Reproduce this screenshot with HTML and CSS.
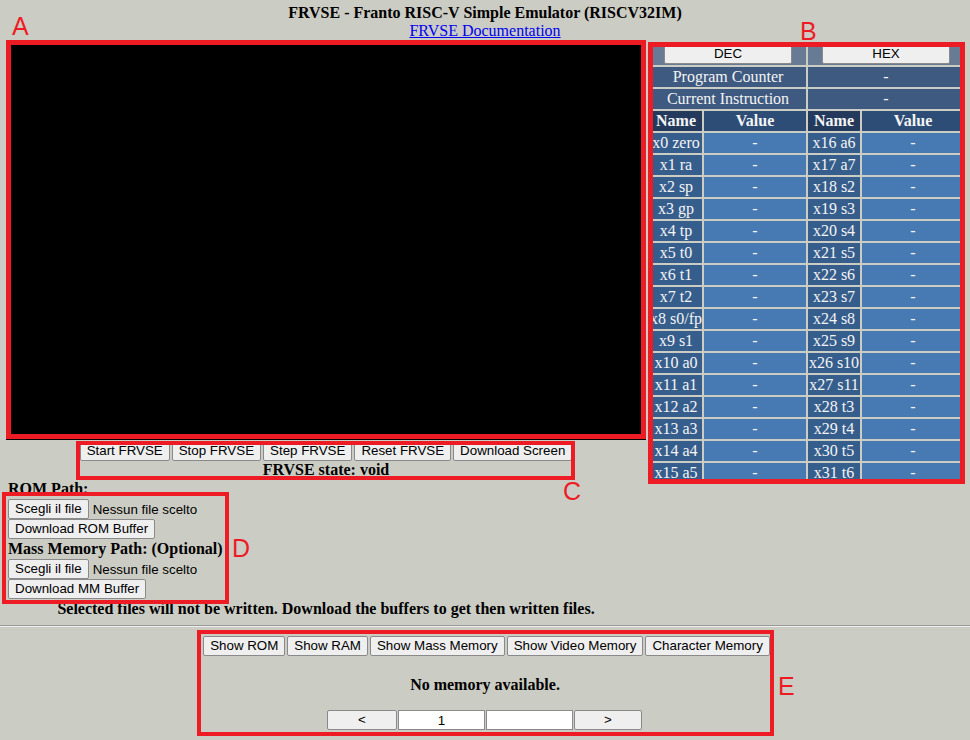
FILE: index.html
```html
<!DOCTYPE html>
<html lang="it">
<head>
<meta charset="utf-8">
<title>FRVSE</title>
<link rel="stylesheet" href="styles.css">
</head>
<body>
<header class="top">
  <div class="title">FRVSE - Franto RISC-V Simple Emulator (RISCV32IM)</div>
  <div class="doc-line"><a class="doc" href="#">FRVSE Documentation</a></div>
</header>

<main class="main">
  <section class="left">
    <div class="screen"></div>
    <div class="controls">
      <button class="btn">Start FRVSE</button>
      <button class="btn">Stop FRVSE</button>
      <button class="btn">Step FRVSE</button>
      <button class="btn">Reset FRVSE</button>
      <button class="btn">Download Screen</button>
    </div>
    <div class="state">FRVSE state: void</div>
    <div class="files">
      <div class="label">ROM Path:</div>
      <div class="filerow"><button class="btn">Scegli il file</button><span class="nofile">Nessun file scelto</span></div>
      <div class="btnrow"><button class="btn">Download ROM Buffer</button></div>
      <div class="label">Mass Memory Path: (Optional)</div>
      <div class="filerow"><button class="btn">Scegli il file</button><span class="nofile">Nessun file scelto</span></div>
      <div class="btnrow"><button class="btn">Download MM Buffer</button></div>
    </div>
    <div class="note">Selected files will not be written. Download the buffers to get then written files.</div>
  </section>

  <section class="right">
    <table class="regs">
      <colgroup><col class="c-name"><col class="c-val"><col class="c-name"><col class="c-val"></colgroup>
      <tr class="r-mode"><td colspan="2"><button class="btn mode">DEC</button></td><td colspan="2"><button class="btn mode">HEX</button></td></tr>
      <tr class="r-info"><td colspan="2">Program Counter</td><td colspan="2">-</td></tr>
      <tr class="r-info"><td colspan="2">Current Instruction</td><td colspan="2">-</td></tr>
      <tr class="r-head"><th class="hn">Name</th><th class="hv">Value</th><th class="hn">Name</th><th class="hv">Value</th></tr>
      <tr><td class="n">x0 zero</td><td class="v">-</td><td class="n">x16 a6</td><td class="v">-</td></tr>
      <tr><td class="n">x1 ra</td><td class="v">-</td><td class="n">x17 a7</td><td class="v">-</td></tr>
      <tr><td class="n">x2 sp</td><td class="v">-</td><td class="n">x18 s2</td><td class="v">-</td></tr>
      <tr><td class="n">x3 gp</td><td class="v">-</td><td class="n">x19 s3</td><td class="v">-</td></tr>
      <tr><td class="n">x4 tp</td><td class="v">-</td><td class="n">x20 s4</td><td class="v">-</td></tr>
      <tr><td class="n">x5 t0</td><td class="v">-</td><td class="n">x21 s5</td><td class="v">-</td></tr>
      <tr><td class="n">x6 t1</td><td class="v">-</td><td class="n">x22 s6</td><td class="v">-</td></tr>
      <tr><td class="n">x7 t2</td><td class="v">-</td><td class="n">x23 s7</td><td class="v">-</td></tr>
      <tr><td class="n">x8 s0/fp</td><td class="v">-</td><td class="n">x24 s8</td><td class="v">-</td></tr>
      <tr><td class="n">x9 s1</td><td class="v">-</td><td class="n">x25 s9</td><td class="v">-</td></tr>
      <tr><td class="n">x10 a0</td><td class="v">-</td><td class="n">x26 s10</td><td class="v">-</td></tr>
      <tr><td class="n">x11 a1</td><td class="v">-</td><td class="n">x27 s11</td><td class="v">-</td></tr>
      <tr><td class="n">x12 a2</td><td class="v">-</td><td class="n">x28 t3</td><td class="v">-</td></tr>
      <tr><td class="n">x13 a3</td><td class="v">-</td><td class="n">x29 t4</td><td class="v">-</td></tr>
      <tr><td class="n">x14 a4</td><td class="v">-</td><td class="n">x30 t5</td><td class="v">-</td></tr>
      <tr><td class="n">x15 a5</td><td class="v">-</td><td class="n">x31 t6</td><td class="v">-</td></tr>
    </table>
  </section>
</main>

<hr class="sep">

<section class="memory">
  <div class="memtabs">
    <button class="btn">Show ROM</button>
    <button class="btn">Show RAM</button>
    <button class="btn">Show Mass Memory</button>
    <button class="btn">Show Video Memory</button>
    <button class="btn">Character Memory</button>
  </div>
  <div class="nomem">No memory available.</div>
  <div class="pager">
    <button class="btn pbtn prev">&lt;</button>
    <input class="pin" value="1">
    <input class="pin" value="">
    <button class="btn pbtn next">&gt;</button>
  </div>
</section>

<div class="anno box-a"></div>
<div class="anno box-b"></div>
<div class="anno box-c"></div>
<div class="anno box-d"></div>
<div class="anno box-e"></div>
<div class="tag tag-a">A</div>
<div class="tag tag-b">B</div>
<div class="tag tag-c">C</div>
<div class="tag tag-d">D</div>
<div class="tag tag-e">E</div>
</body>
</html>
```

FILE: styles.css
```css
html, body {
  margin: 0;
  padding: 0;
}
body {
  position: relative;
  background: #cbccc3;
  font-family: "Liberation Serif", "Times New Roman", serif;
  font-size: 16px;
  color: #000;
  width: 970px;
  height: 740px;
  overflow: hidden;
}

.top {
  padding-top: 4px;
  text-align: center;
}
.title {
  font-weight: bold;
  line-height: 18px;
}
.doc-line {
  line-height: 18px;
}
.doc {
  color: #0000ee;
  text-decoration: underline;
}

.main {
  display: flex;
  align-items: flex-start;
  gap: 2px;
  padding-left: 6px;
}

.left {
  width: 640px;
}
.screen {
  width: 640px;
  height: 400px;
  background: #000;
}

.btn {
  box-sizing: border-box;
  height: 20px;
  margin: 0;
  padding: 0 6px;
  font-family: "Liberation Sans", Arial, sans-serif;
  font-size: 13.333px;
  line-height: 16px;
  color: #000;
  background: #efefef;
  border: 1px solid #8a8a8a;
  border-radius: 2px;
  white-space: nowrap;
}

.controls {
  display: flex;
  justify-content: center;
  gap: 2px;
  margin-top: 1px;
}
.state {
  text-align: center;
  font-weight: bold;
  line-height: 18px;
}

.files {
  padding-left: 2px;
}
.label {
  font-weight: bold;
  line-height: 20px;
  height: 20px;
}
.filerow, .btnrow {
  display: flex;
  align-items: center;
  height: 20px;
}
.nofile {
  margin-left: 4px;
  font-family: "Liberation Sans", Arial, sans-serif;
  font-size: 13.333px;
}
.note {
  text-align: center;
  font-weight: bold;
  line-height: 20px;
}

.right {
  width: 318px;
}
.regs {
  table-layout: fixed;
  width: 318px;
  border-collapse: separate;
  border-spacing: 2px;
  color: #f4f4f4;
}
.c-name { width: 52px; }
.c-val { width: 102px; }
.regs td, .regs th {
  padding: 1px 0;
  height: 18px;
  line-height: 18px;
  text-align: center;
  white-space: nowrap;
  overflow: visible;
}
.r-mode td {
  background: #687b94;
  height: 21px;
  line-height: 21px;
}
.mode {
  display: block;
  width: 128px;
  height: 21px;
  margin: 0 auto;
}
.r-info td {
  background: #3e5a80;
}
.r-head th {
  font-weight: bold;
}
.hn {
  background: #233a5c;
}
.hv {
  background: #2d4d76;
}
.n {
  background: #365e8d;
}
.v {
  background: #4779b3;
}

.sep {
  margin: 6px 0 0;
  height: 0;
  border: 0;
  border-top: 1px solid #9a9a9a;
  border-bottom: 1px solid #eeeeee;
}

.memory {
  padding-top: 9px;
}
.memtabs {
  display: flex;
  justify-content: center;
  gap: 2px;
  padding-left: 3px;
}
.nomem {
  margin-top: 19px;
  text-align: center;
  font-weight: bold;
  line-height: 20px;
}
.pager {
  display: flex;
  justify-content: center;
  gap: 1px;
  margin-top: 15px;
  padding-right: 1px;
}
.pbtn.prev { width: 70px; }
.pbtn.next { width: 68px; }
.pin {
  box-sizing: border-box;
  width: 87px;
  height: 20px;
  margin: 0;
  padding: 0 2px;
  border: 1px solid #8a8a8a;
  background: #fff;
  text-align: center;
  font-family: "Liberation Sans", Arial, sans-serif;
  font-size: 13.333px;
  color: #000;
}

/* annotation overlays */
.anno {
  position: absolute;
  box-sizing: border-box;
  border: 4px solid #ed1c24;
}
.box-a { left: 6px; top: 40px; width: 640px; height: 399px; border-width: 5px; }
.box-b { left: 648px; top: 42px; width: 317px; height: 442px; border-width: 5px; }
.box-c { left: 76px; top: 441px; width: 499px; height: 39px; }
.box-d { left: 2px; top: 492px; width: 227px; height: 112px; }
.box-e { left: 197px; top: 630px; width: 577px; height: 106px; }

.tag {
  position: absolute;
  font-family: "Liberation Sans", Arial, sans-serif;
  font-size: 25px;
  line-height: 25px;
  color: #ed1c24;
}
.tag-a { left: 12px; top: 14px; }
.tag-b { left: 800px; top: 19px; }
.tag-c { left: 563px; top: 479px; }
.tag-d { left: 232px; top: 536px; }
.tag-e { left: 778px; top: 674px; }
```
